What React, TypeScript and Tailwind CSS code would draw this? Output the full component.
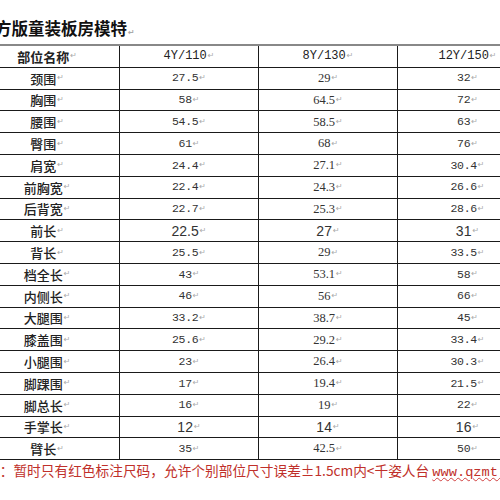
import React from "react";

type Font = "m" | "s" | "a";

interface Row {
  name: string;
  cells: [string, Font][];
}

// size chart rows: label + three size columns with their font style
const rows: Row[] = [
  { name: "颈围", cells: [["27.5", "m"], ["29", "s"], ["32", "m"]] },
  { name: "胸围", cells: [["58", "m"], ["64.5", "s"], ["72", "m"]] },
  { name: "腰围", cells: [["54.5", "m"], ["58.5", "s"], ["63", "m"]] },
  { name: "臀围", cells: [["61", "m"], ["68", "s"], ["76", "m"]] },
  { name: "肩宽", cells: [["24.4", "m"], ["27.1", "s"], ["30.4", "m"]] },
  { name: "前胸宽", cells: [["22.4", "m"], ["24.3", "s"], ["26.6", "m"]] },
  { name: "后背宽", cells: [["22.7", "m"], ["25.3", "s"], ["28.6", "m"]] },
  { name: "前长", cells: [["22.5", "a"], ["27", "a"], ["31", "a"]] },
  { name: "背长", cells: [["25.5", "m"], ["29", "s"], ["33.5", "m"]] },
  { name: "档全长", cells: [["43", "m"], ["53.1", "s"], ["58", "m"]] },
  { name: "内侧长", cells: [["46", "m"], ["56", "s"], ["66", "m"]] },
  { name: "大腿围", cells: [["33.2", "m"], ["38.7", "s"], ["45", "m"]] },
  { name: "膝盖围", cells: [["25.6", "m"], ["29.2", "s"], ["33.4", "m"]] },
  { name: "小腿围", cells: [["23", "m"], ["26.4", "s"], ["30.3", "m"]] },
  { name: "脚踝围", cells: [["17", "m"], ["19.4", "s"], ["21.5", "m"]] },
  { name: "脚总长", cells: [["16", "m"], ["19", "s"], ["22", "m"]] },
  { name: "手掌长", cells: [["12", "a"], ["14", "a"], ["16", "a"]] },
  { name: "臂长", cells: [["35", "m"], ["42.5", "s"], ["50", "m"]] },
];

const fontClass: Record<Font, string> = {
  m: "font-['Liberation_Mono','DejaVu_Sans_Mono',monospace] text-[11.5px] tracking-[-0.3px]",
  s: "font-['Liberation_Serif',serif] text-[12.5px]",
  a: "font-['Liberation_Sans',Arial,sans-serif] text-[14px]",
};

const Mark = () => (
  <span className="font-['DejaVu_Sans',sans-serif] text-[8px] text-[#aaa] ml-[1px]">↵</span>
);

const Cell: React.FC<{ w: string; children: React.ReactNode; last?: boolean }> = ({ w, children, last }) => (
  <div className={`${w} flex items-center justify-center ${last ? "" : "border-r border-[#1a1a1a]"}`}>
    {children}
  </div>
);

export default function App() {
  return (
    <div className="w-[500px] h-[500px] overflow-hidden bg-white text-[#222] font-['Noto_Sans_CJK_SC',sans-serif]">
      <div className="h-[44px] flex items-end">
        <div className="ml-[-5px] text-[16.5px] font-bold leading-[22px] text-[#111] whitespace-nowrap">
          方版童装板房模特<Mark />
        </div>
      </div>

      <div className="ml-[-25px] w-[562px] border-t-2 border-[#888]">
        <div className="h-[21.8px] flex border-b border-[#1a1a1a]">
          <Cell w="w-[145px]">
            <span className="text-[13px] font-bold leading-none">部位名称</span>
            <Mark />
          </Cell>
          {["4Y/110", "8Y/130", "12Y/150"].map((s, i) => (
            <Cell key={s} w="w-[139px]" last={i === 2}>
              <span className="font-['Liberation_Mono',monospace] text-[12px] leading-none">{s}</span>
              <Mark />
            </Cell>
          ))}
        </div>
        {rows.map((r) => (
          <div key={r.name} className="h-[21.8px] flex border-b border-[#1a1a1a]">
            <Cell w="w-[145px]">
              <span className="text-[13px] font-medium leading-none">{r.name}</span>
              <Mark />
            </Cell>
            {r.cells.map(([v, f], i) => (
              <Cell key={i} w="w-[139px]" last={i === 2}>
                <span className={`${fontClass[f]} leading-none text-[#333]`}>{v}</span>
                <Mark />
              </Cell>
            ))}
          </div>
        ))}
      </div>

      <div className="ml-[-14px] mt-[1px] whitespace-nowrap text-[13.7px] leading-[18px] text-[#c0302a]">
        注：暂时只有红色标注尺码，允许个别部位尺寸误差±1.5cm内&lt;千姿人台{" "}
        <span className="font-['Liberation_Mono',monospace] underline decoration-wavy decoration-[#d04040] decoration-1">
          www.qzmt.com
        </span>
      </div>
    </div>
  );
}
